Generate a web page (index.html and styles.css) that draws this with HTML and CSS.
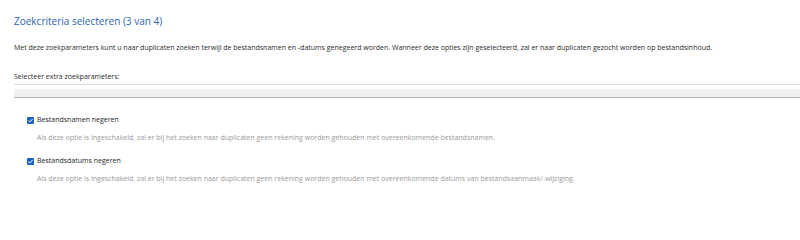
FILE: index.html
```html
<!DOCTYPE html>
<html lang="nl">
<head>
<meta charset="UTF-8">
<title>Zoekcriteria selecteren</title>
<link rel="stylesheet" href="styles.css">
</head>
<body>

<div class="wizard">
    <h1 class="title">Zoekcriteria selecteren (3 van 4)</h1>
    <p class="intro">Met deze zoekparameters kunt u naar duplicaten zoeken terwijl de bestandsnamen en -datums genegeerd worden. Wanneer deze opties zijn geselecteerd, zal er naar duplicaten gezocht worden op bestandsinhoud.</p>
    <div class="section-label">Selecteer extra zoekparameters:</div>
    <div class="toolbar"></div>

    <div class="options">
        <div class="option">
            <label class="check">
                <span class="box"><svg viewBox="0 0 8 8" width="7" height="7"><path d="M1.6 4.1 L3.3 5.7 L6.4 2.3" fill="none" stroke="#fff" stroke-width="1.1"/></svg></span>
                Bestandsnamen negeren
            </label>
            <p class="hint">Als deze optie is ingeschakeld, zal er bij het zoeken naar duplicaten geen rekening worden gehouden met overeenkomende bestandsnamen.</p>
        </div>
        <div class="option">
            <label class="check">
                <span class="box"><svg viewBox="0 0 8 8" width="7" height="7"><path d="M1.6 4.1 L3.3 5.7 L6.4 2.3" fill="none" stroke="#fff" stroke-width="1.1"/></svg></span>
                Bestandsdatums negeren
            </label>
            <p class="hint">Als deze optie is ingeschakeld, zal er bij het zoeken naar duplicaten geen rekening worden gehouden met overeenkomende datums van bestandsaanmaak/-wijziging.</p>
        </div>
    </div>
</div>

</body>
</html>
```

FILE: styles.css
```css
body {
    margin: 0;
    padding: 0;
    background-color: #fff;
    font-family: 'Open Sans', 'Noto Sans', sans-serif;
    color: #2b2b2b;
}
.wizard {
    padding: 13px 0 0 14px;
}
.title {
    margin: 0;
    font-size: 10px;
    font-weight: 400;
    line-height: 16px;
    color: #2a65b0;
}
.intro {
    margin: 14px 0 0;
    font-size: 7px;
    line-height: 10px;
}
.section-label {
    margin-top: 19px;
    font-size: 7px;
    line-height: 10px;
    padding-bottom: 2px;
    border-bottom: 1px solid #dcdcdc;
}
.toolbar {
    margin-top: 4px;
    height: 8px;
    background-color: #f0f0f0;
    border-bottom: 1px solid #b4b4b4;
}
.options {
    padding: 17px 0 0 13px;
}
.option {
    margin-bottom: 13px;
}
.check {
    display: flex;
    align-items: center;
    gap: 3px;
    font-size: 7px;
    line-height: 10px;
    color: #1e1e1e;
}
.box {
    display: flex;
    width: 7px;
    height: 7px;
    border-radius: 1px;
    background-color: #1a64c4;
}
.hint {
    margin: 8px 0 0 10px;
    font-size: 7px;
    line-height: 10px;
    color: #9a9a9a;
}
```
